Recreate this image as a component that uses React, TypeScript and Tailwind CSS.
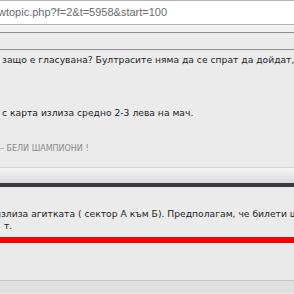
import React from 'react';

export default function App() {
    return (
        <div className="w-[294px] h-[294px] overflow-hidden bg-[#ebebeb] font-['DejaVu_Sans',sans-serif] text-[9.2px] text-[#1e1e1e]">
            {/* address bar */}
            <div className="h-[25px] bg-white border-t border-b border-[#b4b4b4] flex items-center whitespace-nowrap">
                <span className="-ml-[2px] font-['Liberation_Sans',sans-serif] text-[11px] text-[#6b6b6b]">
                    wtopic.php?f=2&amp;t=5958&amp;start=100
                </span>
            </div>
            <div className="h-[7px] bg-[#f1f1f1]" />
            <div className="h-[18px] border-y border-[#8e8e8e] bg-[#ececec]" />

            {/* first post */}
            <div className="h-[117px] whitespace-nowrap">
                <p className="pt-[4px] leading-[12px] pl-[2px]">защо е гласувана? Бултрасите няма да се спрат да дойдат,</p>
                <p className="pt-[41px] leading-[12px] pl-[2px]">с карта излиза средно 2-3 лева на мач.</p>
                <p className="pt-[24px] leading-[12px] text-[8px] text-[#8a8a8a]">– БЕЛИ ШАМПИОНИ !</p>
            </div>

            {/* post separator */}
            <div className="h-[16px] border-t border-[#d6d6d6] bg-gradient-to-b from-[#f4f4f4] to-[#dcdcdc]" />
            <div className="h-[4px] bg-[#3a3c40]" />

            {/* second post */}
            <div className="h-[49px] whitespace-nowrap">
                <p className="pt-[21px] leading-[12px] -ml-[5px]">излиза агитката ( сектор А към Б). Предполагам, че билети щ</p>
                <p className="leading-[11px] pl-[4px]">т.</p>
            </div>
            <div className="border-y border-white">
                <div className="h-[6px] bg-[#ff0000]" />
            </div>
            <div className="h-[36px] bg-[#e9e9e9]" />
            <div className="h-[13px] border-t border-[#c4c4c4] bg-[#e0e0e0]" />
        </div>
    );
}
